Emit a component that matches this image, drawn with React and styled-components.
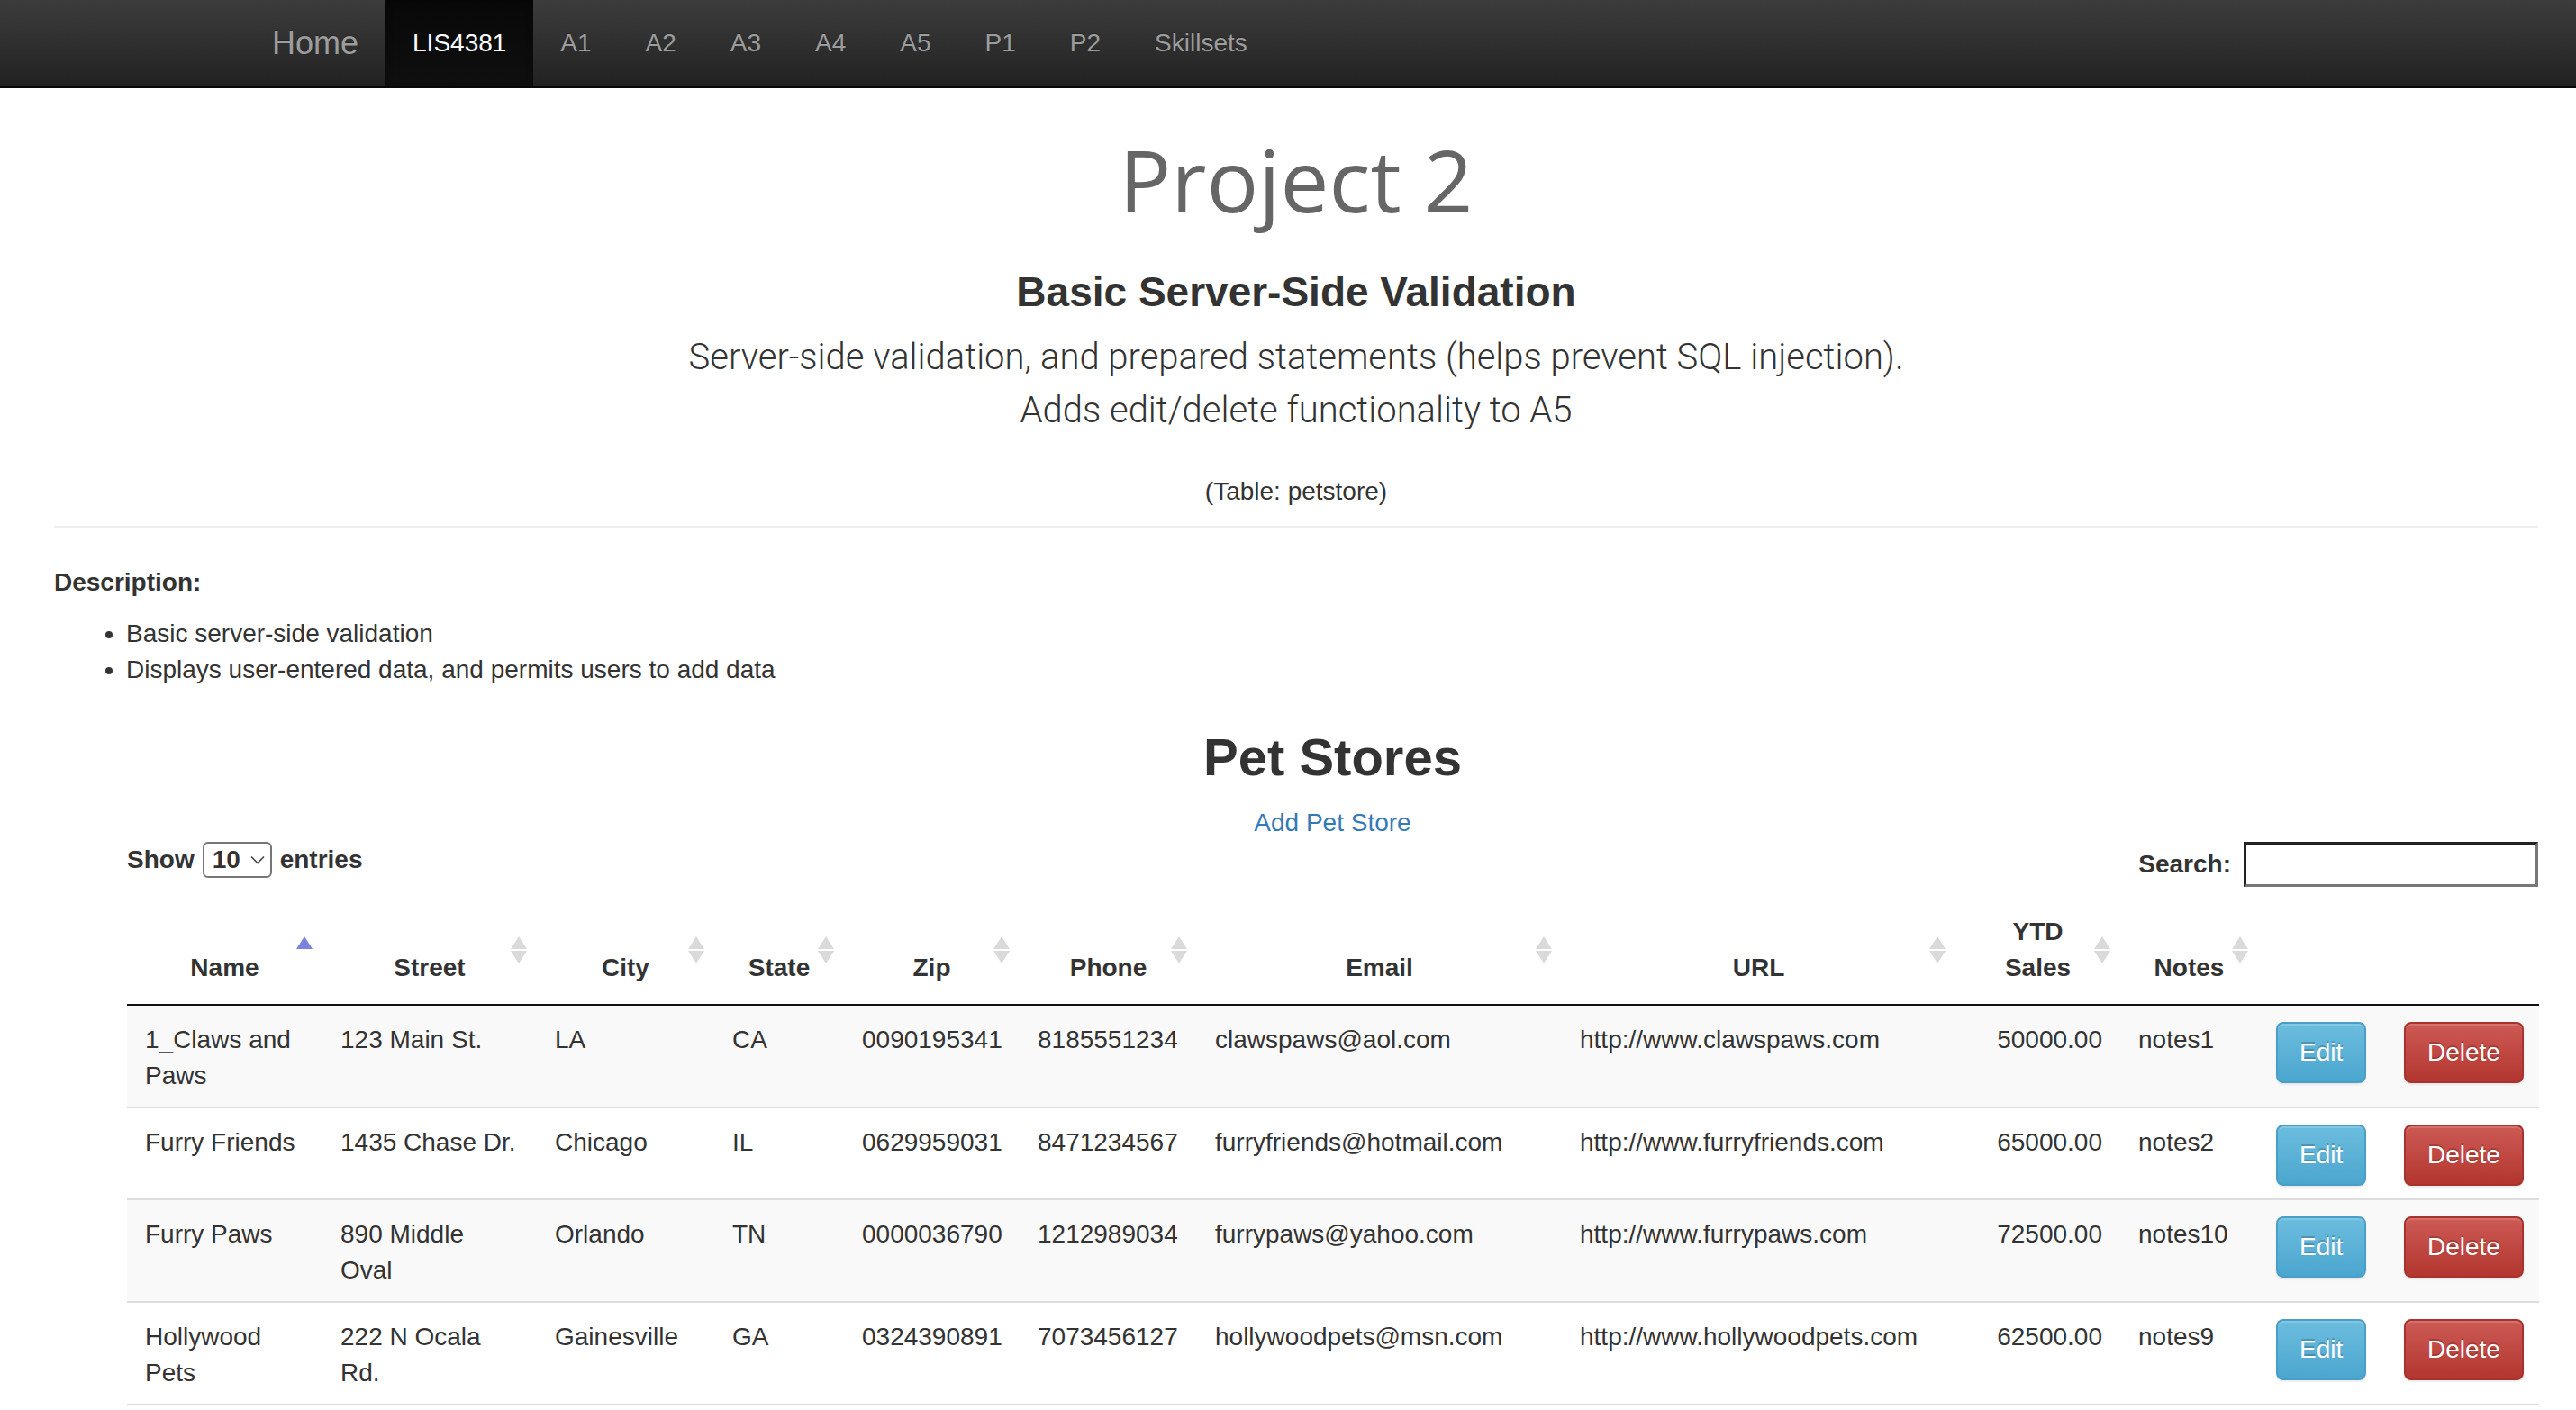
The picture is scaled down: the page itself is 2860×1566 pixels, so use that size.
import React from "react"
import styled, { createGlobalStyle } from "styled-components"

const Global = createGlobalStyle`
  * { box-sizing: border-box; }
  html, body { margin: 0; padding: 0; background: #fff; overflow: hidden; }
  body {
    font-family: "Liberation Sans", Arial, Helvetica, sans-serif;
    font-size: 28px;
    line-height: 40px;
    color: #333;
  }
`

const Navbar = styled.nav`
    display: flex;
    height: 98px;
    padding-left: 272px;
    background: linear-gradient(to bottom, #3c3c3c 0%, #222 100%);
    border-bottom: 2px solid #080808;
`
const Brand = styled.a`
    padding: 28px 30px;
    font-size: 36px;
    line-height: 40px;
    color: #9d9d9d;
    text-decoration: none;
    text-shadow: 0 -1px 0 rgba(0,0,0,.25);
`
const NavList = styled.ul`
    display: flex;
    margin: 0;
    padding: 0;
    list-style: none;
`
const NavLink = styled.a`
    display: block;
    height: 96px;
    padding: 28px 30px;
    color: ${p => p.$active ? "#fff" : "#9d9d9d"};
    background: ${p => p.$active ? "linear-gradient(to bottom, #080808 0%, #0f0f0f 100%)" : "none"};
    box-shadow: ${p => p.$active ? "inset 0 3px 9px rgba(0,0,0,.25)" : "none"};
    text-decoration: none;
    text-shadow: 0 -1px 0 rgba(0,0,0,.25);
`

const Page = styled.main`
    padding: 0 42px 0 60px;
`
const Header = styled.header`
    text-align: center;
`
const Title = styled.h1`
    margin: 48px 0 0;
    font-family: "Open Sans", "Noto Sans", sans-serif;
    font-size: 96px;
    line-height: 1.1;
    font-weight: 400;
    color: #666;
`
const Subtitle = styled.h3`
    margin: 47px 0 0;
    font-size: 46px;
    line-height: 1.1;
    font-weight: bold;
    color: #333;
`
const Lead = styled.p`
    margin: 19px 0 0;
    font-family: Roboto, "Liberation Sans", sans-serif;
    font-weight: 300;
    font-size: 40px;
    line-height: 58.8px;
`
const TableNote = styled.p`
    margin: 40px 0 0;
`
const Rule = styled.hr`
    margin: 18px 0 0;
    border: 0;
    border-top: 2px solid #eee;
`
const Desc = styled.p`
    margin: 41px 0 0;
    font-weight: bold;
`
const Bullets = styled.ul`
    margin: 17px 0 0;
    padding-left: 80px;
`

const Section = styled.section`
    padding-left: 81px;
`
const SectionTitle = styled.h2`
    margin: 45px 0 0;
    text-align: center;
    font-size: 58px;
    line-height: 1.1;
    font-weight: bold;
`
const AddLink = styled.a`
    display: block;
    margin-top: 21px;
    text-align: center;
    color: #337ab7;
    text-decoration: none;
`
const Controls = styled.div`
    display: flex;
    justify-content: space-between;
    align-items: flex-start;
    margin-top: 1px;
`
const Label = styled.label`
    display: flex;
    align-items: center;
    gap: ${p => p.$gap}px;
    margin-bottom: 10px;
    font-weight: bold;
`
const SelectBox = styled.span`
    display: inline-flex;
    align-items: center;
    justify-content: space-between;
    width: 77px;
    height: 40px;
    padding: 0 6px 0 9px;
    border: 2px solid #767676;
    border-radius: 6px;
`
const SearchInput = styled.input`
    width: 327px;
    height: 50px;
    border: 3px solid;
    border-color: #222 #777 #777 #222;
    font: inherit;
    background: #fff;
`

const Table = styled.table`
    width: 2678px;
    table-layout: fixed;
    border-collapse: separate;
    border-spacing: 0;

    tbody tr + tr > td { border-top: 2px solid #ddd; }
    tbody tr:last-child > td { border-bottom: 2px solid #ddd; }
`
const Col = styled.col`
    width: ${p => p.$w}px;
`
const Th = styled.th`
    position: relative;
    padding: 20px 36px;
    text-align: center;
    vertical-align: bottom;
    font-weight: bold;
    border-bottom: 2px solid #111;
`
const SortIcon = styled.svg`
    position: absolute;
    right: 11px;
    top: 50%;
    margin-top: -15px;
    width: 18px;
    height: 30px;
`
const Row = styled.tr`
    background: ${p => p.$odd ? "#f9f9f9" : "#fff"};
`
const Td = styled.td`
    padding: 18px 20px 14px;
    vertical-align: top;
    text-align: ${p => p.$right ? "right" : "left"};
`
const Button = styled.button`
    display: inline-block;
    vertical-align: top;
    padding: 12px 24px;
    font: inherit;
    line-height: 40px;
    color: #fff;
    border: 2px solid ${p => p.$border};
    border-radius: 8px;
    background-image: linear-gradient(to bottom, ${p => p.$from} 0%, ${p => p.$to} 100%);
    text-shadow: 0 -2px 0 rgba(0,0,0,.2);
    box-shadow: inset 0 2px 0 rgba(255,255,255,.15), 0 2px 2px rgba(0,0,0,.075);
`

const navItems = ["A1", "A2", "A3", "A4", "A5", "P1", "P2", "Skillsets"]

const columns = [
    { label: "Name", w: 217, sort: "asc" },
    { label: "Street", w: 238, sort: "both" },
    { label: "City", w: 197, sort: "both" },
    { label: "State", w: 144, sort: "both" },
    { label: "Zip", w: 195, sort: "both" },
    { label: "Phone", w: 197, sort: "both" },
    { label: "Email", w: 405, sort: "both" },
    { label: "URL", w: 437, sort: "both" },
    { label: "YTD Sales", w: 183, sort: "both" },
    { label: "Notes", w: 153, sort: "both" },
    { label: "", w: 142 },
    { label: "", w: 170 },
]

// YTD Sales (index 8) is right aligned
const SALES = 8

const stores = [
    ["1_Claws and Paws", "123 Main St.", "LA", "CA", "0090195341", "8185551234", "clawspaws@aol.com", "http://www.clawspaws.com", "50000.00", "notes1"],
    ["Furry Friends", "1435 Chase Dr.", "Chicago", "IL", "0629959031", "8471234567", "furryfriends@hotmail.com", "http://www.furryfriends.com", "65000.00", "notes2"],
    ["Furry Paws", "890 Middle Oval", "Orlando", "TN", "0000036790", "1212989034", "furrypaws@yahoo.com", "http://www.furrypaws.com", "72500.00", "notes10"],
    ["Hollywood Pets", "222 N Ocala Rd.", "Gainesville", "GA", "0324390891", "7073456127", "hollywoodpets@msn.com", "http://www.hollywoodpets.com", "62500.00", "notes9"],
]

function SortMark({ dir }) {
    const asc = dir === "asc"
    return (
        <SortIcon viewBox="0 0 18 30">
            <polygon points="9,0 18,14 0,14" fill={asc ? "#7b83dc" : "#dadada"} />
            {!asc && <polygon points="0,16 18,16 9,30" fill="#dadada" />}
        </SortIcon>
    )
}

export default function App() {
    return (
        <>
            <Global />
            <Navbar>
                <Brand href="#">Home</Brand>
                <NavList>
                    <li><NavLink href="#" $active>LIS4381</NavLink></li>
                    {navItems.map((item) => (
                        <li key={item}><NavLink href="#">{item}</NavLink></li>
                    ))}
                </NavList>
            </Navbar>
            <Page>
                <Header>
                    <Title>Project 2</Title>
                    <Subtitle>Basic Server-Side Validation</Subtitle>
                    <Lead>
                        Server-side validation, and prepared statements (helps prevent SQL injection).<br />
                        Adds edit/delete functionality to A5
                    </Lead>
                    <TableNote>(Table: petstore)</TableNote>
                </Header>
                <Rule />
                <Desc>Description:</Desc>
                <Bullets>
                    <li>Basic server-side validation</li>
                    <li>Displays user-entered data, and permits users to add data</li>
                </Bullets>

                <Section>
                    <SectionTitle>Pet Stores</SectionTitle>
                    <AddLink href="#">Add Pet Store</AddLink>
                    <Controls>
                        <Label $gap={9}>
                            Show
                            <SelectBox>
                                10
                                <svg width="16" height="10" viewBox="0 0 16 10">
                                    <polyline points="1,1.5 8,8.5 15,1.5" fill="none" stroke="#444" strokeWidth="1.6" />
                                </svg>
                            </SelectBox>
                            entries
                        </Label>
                        <Label $gap={14}>
                            Search:
                            <SearchInput type="search" />
                        </Label>
                    </Controls>
                    <Table>
                        <colgroup>
                            {columns.map((c, i) => <Col key={i} $w={c.w} />)}
                        </colgroup>
                        <thead>
                            <tr>
                                {columns.map((c, i) => (
                                    <Th key={i}>
                                        {c.label}
                                        {c.sort && <SortMark dir={c.sort} />}
                                    </Th>
                                ))}
                            </tr>
                        </thead>
                        <tbody>
                            {stores.map((s, i) => (
                                <Row key={s[0]} $odd={i % 2 === 0}>
                                    {s.map((v, j) => <Td key={j} $right={j === SALES}>{v}</Td>)}
                                    <Td>
                                        <Button $from="#6cbddf" $to="#4ba6ce" $border="#4a9fc8">Edit</Button>
                                    </Td>
                                    <Td>
                                        <Button $from="#cd5a55" $to="#b3362f" $border="#a8332e">Delete</Button>
                                    </Td>
                                </Row>
                            ))}
                        </tbody>
                    </Table>
                </Section>
            </Page>
        </>
    )
}
